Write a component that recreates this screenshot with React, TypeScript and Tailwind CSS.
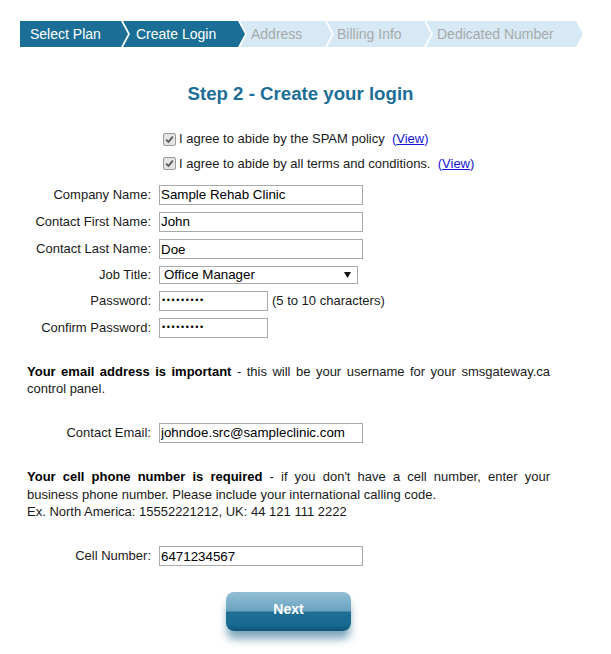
import React from "react";

const steps = [
  { label: "Select Plan", active: true, first: true, w: "w-[108px]", pl: "pl-[10px]" },
  { label: "Create Login", active: true, first: false, w: "w-[122px]", pl: "pl-[13px]" },
  { label: "Address", active: false, first: false, w: "w-[92px]", pl: "pl-[11px]" },
  { label: "Billing Info", active: false, first: false, w: "w-[104px]", pl: "pl-[10px]" },
  { label: "Dedicated Number", active: false, first: false, w: "w-[157px]", pl: "pl-[11px]" },
];

function Steps() {
  return (
    <div className="flex h-[26px] mt-[21px]">
      {steps.map((s) => (
        <div
          key={s.label}
          className={[
            "h-[26px] leading-[26px] text-[14px] shrink-0 whitespace-nowrap",
            s.w,
            s.pl,
            s.active ? "bg-[#1b6e95] text-white" : "bg-[#d6e9f5] text-[#a9a9a9]",
            s.first
              ? "[clip-path:polygon(0_0,calc(100%_-_7px)_0,100%_50%,calc(100%_-_7px)_100%,0_100%)]"
              : "-ml-[5px] [clip-path:polygon(0_0,calc(100%_-_7px)_0,100%_50%,calc(100%_-_7px)_100%,0_100%,7px_50%)]",
          ].join(" ")}
        >
          {s.label}
        </div>
      ))}
    </div>
  );
}

function Check() {
  return (
    <span className="ml-[4px] mr-[3px] w-[13px] h-[13px] shrink-0 border border-[#9a9a9a] bg-[#e4e4e4] rounded-[2px] flex items-center justify-center">
      <svg width="9" height="9" viewBox="0 0 9 9">
        <path d="M1.2 4.6 L3.5 7 L7.8 1.6" fill="none" stroke="#555" strokeWidth="1.8" />
      </svg>
    </span>
  );
}

function Field({ label, h, children }: { label: string; h: string; children: React.ReactNode }) {
  return (
    <div className={`flex items-center ${h}`}>
      <div className="w-[132px] text-right pr-[1px]">{label}</div>
      <div className="ml-[7px] flex items-center">{children}</div>
    </div>
  );
}

function TextBox({ value, w = "w-[204px]" }: { value: string; w?: string }) {
  return (
    <input
      readOnly
      value={value}
      className={`${w} h-[20px] border border-[#a9a9a9] px-[1px] text-[13.33px] text-black outline-none font-['Liberation_Sans',Arial,sans-serif]`}
    />
  );
}

function PasswordBox() {
  return (
    <div className="w-[109px] h-[20px] border border-[#a9a9a9] pl-[2px] flex items-center text-[9px] tracking-[1.6px] text-black">
      •••••••••
    </div>
  );
}

export default function App() {
  return (
    <div className="w-[611px] min-h-[654px] bg-white px-[20px] text-[13px] text-[#1a1a1a] font-['Liberation_Sans',Arial,sans-serif]">
      <Steps />

      <h1 className="mt-[36px] text-center text-[18.67px] leading-[22px] font-bold text-[#1c6e96] pr-[10px]">
        Step 2 - Create your login
      </h1>

      <div className="mt-[22px] ml-[139px]">
        <div className="flex items-center h-[24px]">
          <Check />
          <span>
            I agree to abide by the SPAM policy{"\u00a0\u00a0"}
            <span className="text-[#1515d6]">
              (<a className="underline">View</a>)
            </span>
          </span>
        </div>
        <div className="flex items-center h-[24px] pt-[1px]">
          <Check />
          <span>
            I agree to abide by all terms and conditions.{"\u00a0\u00a0"}
            <span className="text-[#1515d6]">
              (<a className="underline">View</a>)
            </span>
          </span>
        </div>
      </div>

      <div className="mt-[6px]">
        <Field label="Company Name:" h="h-[27px]">
          <TextBox value="Sample Rehab Clinic" />
        </Field>
        <Field label="Contact First Name:" h="h-[27px]">
          <TextBox value="John" />
        </Field>
        <Field label="Contact Last Name:" h="h-[28px]">
          <TextBox value="Doe" />
        </Field>
        <Field label="Job Title:" h="h-[24px]">
          <div className="w-[199px] h-[18px] border border-[#a9a9a9] pl-[4px] pr-[6px] flex items-center justify-between text-[13.33px] text-black">
            <span>Office Manager</span>
            <svg width="7" height="6" viewBox="0 0 7 6">
              <path d="M0 0 H7 L3.5 6 Z" fill="#111" />
            </svg>
          </div>
        </Field>
        <Field label="Password:" h="h-[27px]">
          <PasswordBox />
          <span className="ml-[4px]">(5 to 10 characters)</span>
        </Field>
        <Field label="Confirm Password:" h="h-[27px]">
          <PasswordBox />
        </Field>
      </div>

      <p className="mt-[22px] ml-[7px] w-[523px] text-justify leading-[17px]">
        <b className="text-black">Your email address is important</b> - this will be your username for your
        smsgateway.ca control panel.
      </p>

      <div className="mt-[22px]">
        <Field label="Contact Email:" h="h-[27px]">
          <TextBox value="johndoe.src@sampleclinic.com" />
        </Field>
      </div>

      <p className="mt-[22px] ml-[7px] w-[523px] text-justify leading-[17.5px]">
        <b className="text-black">Your cell phone number is required</b> - if you don't have a cell number, enter
        your business phone number. Please include your international calling code.
        <br />
        Ex. North America: 15552221212, UK: 44 121 111 2222
      </p>

      <div className="mt-[22px]">
        <Field label="Cell Number:" h="h-[27px]">
          <TextBox value="6471234567" />
        </Field>
      </div>

      <div className="mt-[22px] ml-[206px]">
        <button className="w-[125px] h-[39px] rounded-[8px] text-white font-bold text-[14px] pb-[3px] bg-[linear-gradient(to_bottom,#93bfd5_0%,#6aa3c0_48%,#1d6f95_52%,#176990_85%,#0e5375_100%)] shadow-[0_9px_9px_-1px_rgba(25,95,135,0.55)]">
          Next
        </button>
      </div>
    </div>
  );
}
